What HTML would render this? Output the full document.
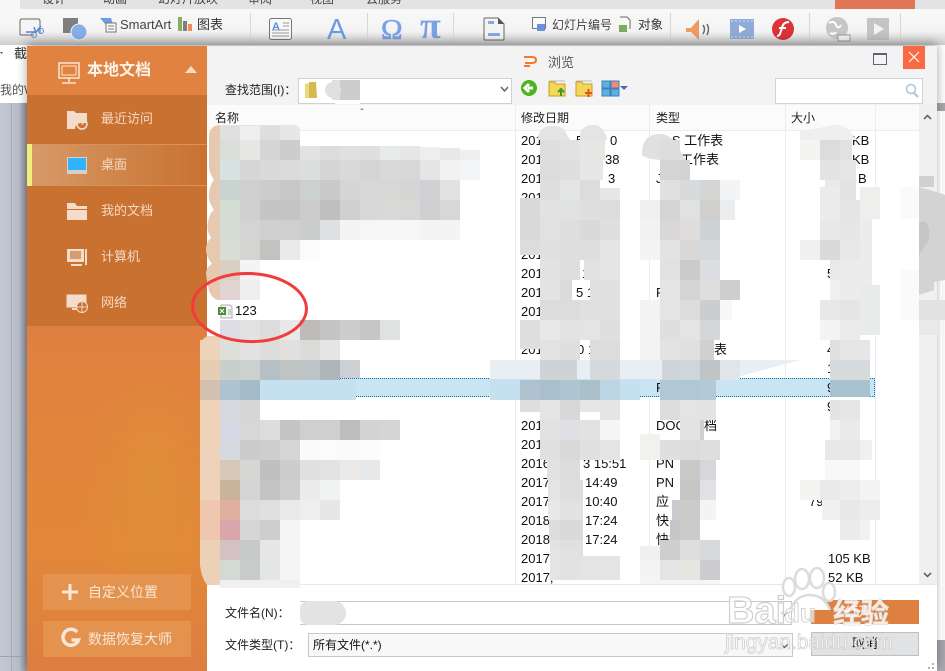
<!DOCTYPE html>
<html><head><meta charset="utf-8"><style>
*{box-sizing:border-box}
html,body{margin:0;padding:0}
body{width:945px;height:671px;position:relative;overflow:hidden;background:#fff;font-family:"Liberation Sans","Noto Sans CJK SC",sans-serif;font-size:13px;color:#111}
.a{position:absolute;white-space:nowrap}
.t{position:absolute;white-space:nowrap;line-height:16px;font-size:13px}
svg{position:absolute;left:0;top:0}
.m rect{width:20px;height:20px;shape-rendering:crispEdges}
.nav{position:absolute;left:101px;color:#f5d8c2;font-size:13px;line-height:16px;white-space:nowrap}
.btn{position:absolute;left:43px;width:148px;height:36px;background:#e4934f;color:#f8e6d6;font-size:14px;line-height:36px;padding-left:45px}
.ln{position:absolute;top:105px;width:1px;height:479px;background:#e5edf8}
.h{position:absolute;top:110px;font-size:12px;line-height:16px;color:#222}
</style></head><body>

<!-- ribbon -->
<div class="a" style="left:0;top:0;width:945px;height:9px;background:#e3e3e5"></div>
<div class="a" style="left:0;top:0;width:20px;height:9px;background:#f6f6f6"></div>
<div class="a" style="left:835px;top:0;width:80px;height:9px;background:#e07656"></div>
<div class="a" style="left:0;top:9px;width:945px;height:36px;background:linear-gradient(#f8f8f8,#f4f4f4 60%,#cfcfcf)"></div>
<div class="a" style="left:0;top:-9px;height:16px;width:945px;font-size:12px;line-height:16px;color:#444">
<span class="a" style="left:42px">设计</span><span class="a" style="left:103px">动画</span><span class="a" style="left:158px">幻灯片放映</span><span class="a" style="left:248px">审阅</span><span class="a" style="left:310px">视图</span><span class="a" style="left:366px">云服务</span></div>
<div class="a" style="left:250px;top:13px;width:1px;height:32px;background:#d8d8d8"></div>
<div class="a" style="left:367px;top:13px;width:1px;height:32px;background:#d8d8d8"></div>
<div class="a" style="left:453px;top:13px;width:1px;height:32px;background:#d8d8d8"></div>
<div class="a" style="left:670px;top:13px;width:1px;height:32px;background:#d8d8d8"></div>
<div class="a" style="left:809px;top:13px;width:1px;height:32px;background:#d8d8d8"></div>
<div class="a" style="left:900px;top:13px;width:1px;height:32px;background:#d8d8d8"></div>
<span class="t" style="left:120px;top:17px;font-size:13px;color:#444">SmartArt</span>
<span class="t" style="left:197px;top:17px;color:#333">图表</span>
<span class="t" style="left:552px;top:17px;font-size:12px;color:#444">幻灯片编号</span>
<span class="t" style="left:638px;top:17px;font-size:12.5px;color:#333">对象</span>
<span class="t" style="left:14px;top:46px;color:#333">截</span>
<span class="t" style="left:0;top:82px;font-size:12px;color:#555">我的W</span>

<svg width="945" height="60" viewBox="0 0 945 60" fill="none">
 <path d="M0 52h3l-1.500 2z" fill="#555"/>
 <path d="M20 35V21q0-2 2-2h16q2 0 2 2v12M20 35h14" stroke="#666" stroke-width="1"/>
 <circle cx="34" cy="35" r="2.500" stroke="#5a87d8"/><circle cx="41" cy="31" r="2.500" stroke="#5a87d8"/><path d="M26 32h10l5-6M34 27l2 6" stroke="#5a87d8" stroke-width="1.500"/>
 <rect x="63" y="18" width="15" height="15" fill="#7f7f7f"/><circle cx="79" cy="32" r="8" fill="#86aee8" stroke="#f4f4f4"/>
 <path d="M100 18h11l2 6h-8z" fill="#6e9ce0"/><rect x="106" y="23" width="10" height="9" fill="#fafafa" stroke="#777"/><path d="M108 26h6M108 29h6" stroke="#777"/>
 <rect x="178" y="17" width="4" height="14" fill="#86ad62"/><rect x="183" y="21" width="4" height="10" fill="#7f7f7f"/><rect x="188" y="24" width="4" height="7" fill="#ee8e58"/>
 <rect x="269.500" y="18.500" width="22" height="21" rx="2" fill="#f8f8f8" stroke="#777"/><path d="M283 23h6M283 26h6M272 30h17M272 33h17M272 36h17" stroke="#999"/><text x="272" y="30" font-family="Liberation Sans" font-size="11" font-weight="bold" fill="#5a8ee0">A</text>
 <text x="327" y="39" font-family="Liberation Sans" font-size="29" fill="#6f9be6">A</text>
 <text x="381" y="39" font-family="Liberation Serif" font-size="29" fill="#7aa2e6" stroke="#7aa2e6" stroke-width=".6">Ω</text>
 <text x="420" y="38" font-family="Liberation Serif" font-size="38" font-weight="bold" fill="#7aa2e6">π</text>
 <path d="M485 18h13l6 6v15q0 1-1 1h-18q-1 0-1-1V19q0-1 1-1z" fill="#f4f4f4" stroke="#666"/><path d="M498 18l6 6h-6z" fill="#555"/><rect x="488" y="21" width="6" height="3" fill="#86a8e4"/><rect x="488" y="33" width="12" height="3" fill="#86a8e4"/>
 <rect x="532.500" y="17.500" width="13" height="11" fill="#fafafa" stroke="#777"/><rect x="537" y="24" width="8" height="7" fill="#6a92d8"/>
 <path d="M620 17h7l3 3v9" stroke="#666" fill="#fafafa"/><rect x="619" y="25" width="8" height="7" fill="#7cab5c"/>
 <path d="M686 28h5l8-9v21l-8-8h-5z" fill="#ef9a60"/><path d="M703 25q3 4 0 9M707 24q3 5 0 11" stroke="#666" stroke-width="1.500"/>
 <rect x="730" y="19" width="24" height="20" fill="#90abd8"/><path d="M739 25v8l7-4z" fill="#fff"/><path d="M731 21h22M731 37h22" stroke="#d4e0f2" stroke-dasharray="2 2"/>
 <circle cx="783" cy="29" r="11" fill="#dc3238"/><path d="M789 22q-6 0-7 6l-2 6q-1 2-3 2M779 28h7" stroke="#fff" stroke-width="2"/>
 <circle cx="837" cy="28" r="11" fill="#c6c6c6"/><path d="M829 23q5-3 7 2t5 0M830 33q4 2 6-1" stroke="#fff" stroke-width="2"/><rect x="838" y="35" width="12" height="6" fill="#f4f4f4" stroke="#999"/>
 <rect x="867" y="18" width="22" height="22" rx="1" fill="#c4c4c4"/><path d="M874 23v12l10-6z" fill="#f4f4f4"/>
</svg>

<!-- backgrounds outside dialog -->
<div class="a" style="left:0;top:103px;width:27px;height:568px;background:linear-gradient(90deg,#c4c8d4,#b8bcc8 70%,#8f929c)"></div>
<div class="a" style="left:11px;top:103px;width:1px;height:568px;background:#a6aab6"></div>
<div class="a" style="left:0;top:656px;width:27px;height:1px;background:#9ea1ac"></div>
<div class="a" style="left:937px;top:103px;width:8px;height:8px;background:#a8a8ae"></div>
<div class="a" style="left:937px;top:640px;width:8px;height:31px;background:#a9a9ae"></div>

<!-- dialog -->
<div class="a" style="left:27px;top:46px;width:910px;height:625px;background:#fff;box-shadow:0 -3px 10px rgba(0,0,0,.35)"></div>
<div class="a" style="left:937px;top:111px;width:5px;height:529px;background:linear-gradient(90deg,#d8d8d8,#fff)"></div>
<div class="a" style="left:207px;top:46px;width:730px;height:59px;background:#f3f3f3"></div>

<!-- sidebar -->
<div class="a" style="left:27px;top:46px;width:180px;height:625px;background:radial-gradient(ellipse 70px 130px at 125px 440px,#df8e38,rgba(223,142,56,0)),linear-gradient(#e08240,#e08040 45%,#e28838 80%,#dc7e40)"></div>
<div class="a" style="left:27px;top:95px;width:180px;height:231px;background:#c97130"></div>
<div class="a" style="left:27px;top:144px;width:180px;height:42px;background:linear-gradient(90deg,#d89a6c,#d08a50 40%,#c97130);border-top:1px solid #d8925a;border-bottom:1px solid #d8925a"></div>
<div class="a" style="left:27px;top:144px;width:5px;height:42px;background:#f4ee7e"></div>
<span class="a" style="left:87px;top:60px;font-size:16px;line-height:22px;font-weight:bold;color:#fdf3e9">本地文档</span>
<span class="nav" style="top:111px">最近访问</span>
<span class="nav" style="top:157px">桌面</span>
<span class="nav" style="top:203px">我的文档</span>
<span class="nav" style="top:249px">计算机</span>
<span class="nav" style="top:295px">网络</span>
<div class="btn" style="top:574px">自定义位置</div>
<div class="btn" style="top:621px">数据恢复大师</div>

<svg width="945" height="671" viewBox="0 0 945 671" fill="none">
 <rect x="59" y="63" width="20" height="15" stroke="#fbe6d4" stroke-width="1.500"/><rect x="62" y="66" width="14" height="9" stroke="#fbe6d4"/><path d="M69 78v4M62 83h14" stroke="#fbe6d4" stroke-width="1.500"/>
 <path d="M185 73l6-7 6 7z" fill="#f8dcc8"/>
 <path d="M67 111h7l2 2h11v10h-6a6 6 0 0 0-6 6h-8z" fill="#f3dcc9"/><circle cx="82" cy="124" r="5" stroke="#f3dcc9" stroke-width="1.500"/><path d="M82 121v3h2" stroke="#f3dcc9"/>
 <rect x="67" y="157" width="20" height="17" fill="#d8d0c8"/><rect x="68" y="158" width="18" height="12" fill="#2fb4fb"/>
 <path d="M67 203h8l2 3h10v3H67z" fill="#f3dcc9"/><rect x="67" y="210" width="20" height="10" fill="#f3dcc9"/>
 <rect x="67" y="249" width="17" height="13" fill="#f3dcc9"/><rect x="70" y="251" width="11" height="8" fill="#d89b70"/><rect x="85" y="249" width="2" height="16" fill="#f3dcc9"/><rect x="71" y="264" width="11" height="2" fill="#f3dcc9"/>
 <rect x="67" y="295" width="19" height="12" fill="#f3dcc9" stroke="#f3dcc9"/><path d="M72 309h9" stroke="#f3dcc9" stroke-width="2"/><circle cx="82" cy="307" r="5.500" fill="#c97130" stroke="#f3dcc9"/><path d="M77 307h10M82 302v10" stroke="#f3dcc9"/>
 <path d="M62 592h16M70 584v16" stroke="#f8e6d6" stroke-width="3"/>
 <path d="M77 632a8 8 0 1 0 1.500 8h-7" stroke="#f8e6d6" stroke-width="3.500"/>
</svg>

<!-- title / toolbar -->
<svg width="945" height="110" viewBox="0 0 945 110" fill="none" style="z-index:2">
 <path d="M524 57h8q4 0 4 3t-4 3h-7M524 66h6" stroke="#f07a2a" stroke-width="2"/>
 <rect x="873.500" y="53.500" width="13" height="11" stroke="#5a6478" stroke-width="1"/><path d="M873 54h14" stroke="#5a6478" stroke-width="2"/>
 <rect x="903" y="46" width="22" height="23" fill="#f96a43"/><path d="M909 52l10 10M919 52l-10 10" stroke="#fff" stroke-width="1.200"/>
 <circle cx="529" cy="88" r="8" fill="#4cb421"/><path d="M533 88h-5M529 84l-4 4 4 4" stroke="#fff" stroke-width="3"/>
 <path d="M549 82h6l1 2h9v12h-16z" fill="#f4d65c" stroke="#c8a018"/><path d="M561 91v5M558 92l3-3 3 3" stroke="#3a9a2a" stroke-width="2"/><path d="M549 81h16" stroke="#bbb"/>
 <path d="M576 82h6l1 2h9v12h-16z" fill="#f4d65c" stroke="#c8a018"/><path d="M585 93h7M588.500 89v8" stroke="#e84e20" stroke-width="2"/><path d="M576 81h16" stroke="#bbb"/>
 <rect x="602" y="81" width="8" height="7" fill="#5fb0d8" stroke="#3a80c8"/><rect x="611" y="81" width="8" height="7" fill="#f08a70" stroke="#3a80c8"/><rect x="602" y="89" width="8" height="7" fill="#5fb0d8" stroke="#3a80c8"/><rect x="611" y="89" width="8" height="7" fill="#5fb0d8" stroke="#3a80c8"/><path d="M620 86h8l-4 4z" fill="#4a6aa0"/>
 <path d="M501 87l3.500 4 3.500-4" stroke="#666" stroke-width="1.500"/>
 <circle cx="911" cy="89" r="4.500" stroke="#b0c4d4" stroke-width="1.500"/><path d="M914 93l4 4" stroke="#b0c4d4" stroke-width="2"/>
 <path d="M359 111l3-3 3 3z" fill="#6a9ac8"/>
</svg>
<span class="a" style="left:548px;top:55px;font-size:13px;line-height:16px;color:#555;z-index:2">浏览</span>
<span class="a" style="left:225px;top:82px;font-size:12px;line-height:16px;color:#222">查找范围(I)：</span>
<div class="a" style="left:298px;top:78px;width:214px;height:26px;background:#fff;border:1px solid #d0d0d0"></div>
<div class="a" style="left:775px;top:78px;width:148px;height:26px;background:#fff;border:1px solid #cdd3d6"></div>
<svg width="360" height="110" viewBox="0 0 360 110" style="z-index:2" fill="none">
 <path d="M305 84l9-2v16h-9z" fill="#ecd97a"/><path d="M309 82h7l1 16h-8z" fill="#d8b850"/>
 <path d="M335 80h26v24h-26z" fill="#fff"/><rect x="340" y="80" width="20" height="20" fill="#cdcdcd"/><circle cx="333" cy="90" r="8" fill="#e0e0e0"/><rect x="332" y="80" width="8" height="20" fill="#e0e0e0"/>
</svg>

<!-- list header -->
<div class="a" style="left:207px;top:105px;width:712px;height:26px;background:#fbfbfb;border-bottom:1px solid #e5edf5"></div>
<div class="a" style="left:919px;top:105px;width:18px;height:479px;background:#f0f0f0"></div>
<div class="ln" style="left:515px"></div><div class="ln" style="left:649px"></div><div class="ln" style="left:785px"></div><div class="ln" style="left:875px"></div>
<div class="a" style="left:872px;top:218px;width:47px;height:117px;background:#fff"></div>
<span class="h" style="left:215px">名称</span><span class="h" style="left:521px">修改日期</span><span class="h" style="left:656px">类型</span><span class="h" style="left:791px">大小</span>

<!-- selected row -->
<div class="a" style="left:207px;top:378px;width:668px;height:19px;background:#c9e5f4;border:1px dotted #0a6fb0;border-left:0"></div>

<!-- rows text -->
<div class="a" style="left:0;top:0;width:945px;height:600px;font-size:12.500px;color:#111">
<span class="t" style="left:521px;top:133px">201</span><span class="t" style="left:576px;top:133px">5</span><span class="t" style="left:610px;top:133px">0</span>
<span class="t" style="left:521px;top:152px">201</span><span class="t" style="left:570px;top:152px">7</span><span class="t" style="left:605px;top:152px">38</span>
<span class="t" style="left:521px;top:171px">201</span><span class="t" style="left:608px;top:171px">3</span>
<span class="t" style="left:521px;top:190px">201</span>
<span class="t" style="left:521px;top:247px">201</span>
<span class="t" style="left:521px;top:266px">201</span><span class="t" style="left:582px;top:266px">1</span>
<span class="t" style="left:521px;top:285px">201</span><span class="t" style="left:576px;top:285px">5 1</span>
<span class="t" style="left:521px;top:304px">201</span>
<span class="t" style="left:521px;top:361px">201</span><span class="t" style="left:577px;top:361px">7 1</span>
<span class="t" style="left:577px;top:342px">0 1</span><span class="t" style="left:521px;top:342px">201</span>
<span class="t" style="left:521px;top:418px">201</span>
<span class="t" style="left:521px;top:437px">201</span>
<span class="t" style="left:521px;top:456px">2016</span><span class="t" style="left:583px;top:456px">3 15:51</span>
<span class="t" style="left:521px;top:475px">2017</span><span class="t" style="left:585px;top:475px">14:49</span>
<span class="t" style="left:521px;top:494px">2017</span><span class="t" style="left:585px;top:494px">10:40</span>
<span class="t" style="left:521px;top:513px">2018</span><span class="t" style="left:585px;top:513px">17:24</span>
<span class="t" style="left:521px;top:532px">2018</span><span class="t" style="left:585px;top:532px">17:24</span>
<span class="t" style="left:521px;top:551px">2017</span>
<span class="t" style="left:521px;top:570px">2017,</span>
<span class="t" style="left:656px;top:133px">XLS 工作表</span><span class="t" style="left:680px;top:152px">工作表</span><span class="t" style="left:656px;top:171px">J</span><span class="t" style="left:656px;top:285px">P</span><span class="t" style="left:656px;top:209px">XLS</span>
<span class="t" style="left:714px;top:342px">表</span><span class="t" style="left:656px;top:361px">XLS</span><span class="t" style="left:656px;top:380px">P</span>
<span class="t" style="left:656px;top:418px">DOC</span><span class="t" style="left:704px;top:418px">档</span><span class="t" style="left:656px;top:456px">PN</span><span class="t" style="left:656px;top:475px">PN</span><span class="t" style="left:656px;top:494px">应</span><span class="t" style="left:656px;top:513px">快</span><span class="t" style="left:656px;top:532px">快捷</span>
<span class="t" style="left:852px;top:133px">KB</span><span class="t" style="left:852px;top:152px">KB</span><span class="t" style="left:858px;top:171px">B</span><span class="t" style="left:827px;top:266px">55</span><span class="t" style="left:827px;top:342px">4</span><span class="t" style="left:827px;top:361px">1</span><span class="t" style="left:827px;top:380px">9</span><span class="t" style="left:827px;top:399px">9</span><span class="t" style="left:809px;top:494px">79,</span><span class="t" style="left:828px;top:551px">105 KB</span><span class="t" style="left:828px;top:570px">52 KB</span>
<span class="t" style="left:235px;top:303px;color:#111">123</span>
</div>

<!-- mosaic -->
<svg class="m" width="945" height="671" viewBox="0 0 945 671" style="z-index:1">
<path d="M209 133q3-8 11-8v175h-2q-8-2-10-14-2-9-2-14 2-6 6-8-6-8-6-14 0-8 5-12-5-8-3-16 2-10 6-12-6-8-5-16 1-10 5-14-4-6-5-12 0-8 0-14z" fill="#e6c9b0"/>
<path d="M200 345q2-7 8-9h12v4h-20zM200 565h20v20h-13q-6-8-7-20z" fill="#edd0b8"/>
<rect x="200" y="340" fill="#edd3ba"/><rect x="200" y="360" fill="#e6ceb5"/><rect x="200" y="380" fill="#d3c1b1"/>
<rect x="200" y="400" fill="#efd2ba" style="height:100px"/><rect x="200" y="500" fill="#eec7ae" style="height:40px"/><rect x="200" y="540" fill="#edd0b8" style="height:25px"/>
<path d="M225 125h-5v15h80v-8q0-7-7-7z" fill="#e4e4e4"/>
<path d="M220 126h20v14h-20z" fill="#dfe0df"/>
<path d="M240 126h20v14h-20z" fill="#eeeeee"/><path d="M260 126h20v14h-20z" fill="#dedede"/><path d="M280 125h13q7 0 7 7v8h-20z" fill="#e6e7e6"/>
<g>
<rect x="220" y="140" fill="#d9dfd8"/><rect x="240" y="140" fill="#e7e7e6"/><rect x="260" y="140" fill="#d5d5d5"/><rect x="280" y="140" fill="#cdcdcb"/><rect x="300" y="146" fill="#e2e2e2" style="height:14px"/><rect x="320" y="146" fill="#dcdcdc" style="height:14px"/><rect x="340" y="146" fill="#e0e0e0" style="height:14px"/><rect x="360" y="146" fill="#dfdfdf" style="height:14px"/><rect x="380" y="146" fill="#e9eaea" style="height:14px"/><rect x="400" y="146" fill="#e6e6e6" style="height:14px"/><rect x="420" y="147" fill="#eeeeee" style="height:13px"/><rect x="440" y="148" fill="#e8e8e8" style="height:12px"/><rect x="460" y="150" fill="#eeeeee" style="height:10px"/>
<rect x="220" y="160" fill="#d7e2e3"/><rect x="240" y="160" fill="#d6d6d6"/><rect x="260" y="160" fill="#dadada"/><rect x="280" y="160" fill="#dbdbdb"/><rect x="300" y="160" fill="#dcdddd"/><rect x="320" y="160" fill="#d5d5d5"/><rect x="340" y="160" fill="#d9d9d7"/><rect x="360" y="160" fill="#d5d3d4"/><rect x="380" y="160" fill="#d9d9d9"/><rect x="400" y="160" fill="#d7d7d7"/><rect x="420" y="160" fill="#e5e5e6"/><rect x="440" y="160" fill="#f2f2f2"/><rect x="460" y="160" fill="#f4f5f6"/>
<rect x="220" y="180" fill="#c9d3d0"/><rect x="240" y="180" fill="#cfcfcf"/><rect x="260" y="180" fill="#cdcdcd"/><rect x="280" y="180" fill="#c8c7c5"/><rect x="300" y="180" fill="#cdd0d0"/><rect x="320" y="180" fill="#c9c9c9"/><rect x="340" y="180" fill="#d5d5d5"/><rect x="360" y="180" fill="#d7d7d7"/><rect x="380" y="180" fill="#d7d7d6"/><rect x="400" y="180" fill="#d7d5d3"/><rect x="420" y="180" fill="#d0d1d4"/><rect x="440" y="180" fill="#e2e2e2"/>
<rect x="220" y="200" fill="#d5ded5"/><rect x="240" y="200" fill="#d0d0d0"/><rect x="260" y="200" fill="#c6c4c5"/><rect x="280" y="200" fill="#c3c5c5"/><rect x="300" y="200" fill="#cccccc"/><rect x="320" y="200" fill="#bebfbe"/><rect x="340" y="200" fill="#d0d0d0"/><rect x="360" y="200" fill="#d8d8d8"/><rect x="380" y="200" fill="#d9d9d8"/><rect x="400" y="200" fill="#d7d7d6"/><rect x="420" y="200" fill="#ced0d2"/><rect x="440" y="200" fill="#d6d7d7"/>
<rect x="220" y="220" fill="#d5ddd5"/><rect x="240" y="220" fill="#d4d4d4"/><rect x="260" y="220" fill="#d0d0d0"/><rect x="280" y="220" fill="#d1cfce"/><rect x="300" y="220" fill="#cbcccc"/><rect x="320" y="220" fill="#dfe0e2"/><rect x="340" y="220" fill="#f4f4f3"/><rect x="360" y="220" fill="#f6f6f6"/><rect x="380" y="220" fill="#f7f7f7"/><rect x="400" y="220" fill="#f7f7f7"/><rect x="420" y="220" fill="#f4f4f4"/><rect x="440" y="220" fill="#f4f4f5"/>
<rect x="220" y="240" fill="#d8ddd5"/><rect x="240" y="240" fill="#d4d4d3"/><rect x="260" y="240" fill="#c2c2c1"/><rect x="280" y="240" fill="#e9eaea"/><rect x="300" y="240" fill="#fbfbfb"/>
<rect x="220" y="260" fill="#d9cfc2"/><rect x="240" y="260" fill="#f3f5f5"/>
<rect x="220" y="280" fill="#e0d5d3"/><rect x="240" y="280" fill="#eeeeee"/>

<rect x="220" y="320" fill="#dddde3"/><rect x="240" y="320" fill="#e2e2e2"/><rect x="260" y="320" fill="#dcdcdc"/><rect x="280" y="320" fill="#e8e8e8"/><rect x="300" y="320" fill="#bdbcba"/><rect x="320" y="320" fill="#c5c5c5"/><rect x="340" y="320" fill="#cdcdcd"/><rect x="360" y="320" fill="#c7c5c7"/><rect x="380" y="320" fill="#e0e1e1"/>
<rect x="220" y="340" fill="#dde0d9"/><rect x="240" y="340" fill="#e2e2e2"/><rect x="260" y="340" fill="#dcdedc"/><rect x="280" y="340" fill="#e1e0de"/><rect x="300" y="340" fill="#dadcda"/><rect x="320" y="340" fill="#e5e5e3"/>
<rect x="220" y="360" fill="#c8d0cc"/><rect x="240" y="360" fill="#ccd0cf"/><rect x="260" y="360" fill="#b7bfc6"/><rect x="280" y="360" fill="#bfc4c3"/><rect x="300" y="360" fill="#bcc4c7"/><rect x="320" y="360" fill="#aeb6b9"/><rect x="340" y="360" fill="#ccd0d4" style="height:18px"/>
<rect x="220" y="380" fill="#aec3d0"/><rect x="240" y="380" fill="#a3bcc8"/><rect x="260" y="380" fill="#c5e0ee" style="width:96px"/>
<rect x="220" y="400" fill="#d7d9df"/><rect x="240" y="400" fill="#d6d6d6"/>
<rect x="220" y="420" fill="#d5d9e3"/><rect x="240" y="420" fill="#d8d7d5"/><rect x="260" y="420" fill="#dcdede"/><rect x="280" y="420" fill="#c4c4c4"/><rect x="300" y="420" fill="#cfcfcd"/><rect x="320" y="420" fill="#cfcfcd"/><rect x="340" y="420" fill="#bebdbe"/><rect x="360" y="420" fill="#d2d3d2"/><rect x="380" y="420" fill="#d5d5d3"/>
<rect x="220" y="440" fill="#d7d9e0"/><rect x="240" y="440" fill="#cbcbcb"/><rect x="260" y="440" fill="#cdcecd"/><rect x="280" y="440" fill="#d6d6d8"/><rect x="300" y="440" fill="#fafafa"/><rect x="320" y="440" fill="#fbfbfb"/><rect x="340" y="440" fill="#fafafa"/><rect x="360" y="440" fill="#fcfcfc"/>
<rect x="220" y="460" fill="#d8c8b9"/><rect x="240" y="460" fill="#d6d6d4"/><rect x="260" y="460" fill="#bfc1c0"/><rect x="280" y="460" fill="#cdcdcd"/><rect x="300" y="460" fill="#e0e0e0"/><rect x="320" y="460" fill="#e3e3e3"/><rect x="340" y="460" fill="#ebeae8"/><rect x="360" y="460" fill="#e7e8ea"/>
<rect x="220" y="480" fill="#c9b39a"/><rect x="240" y="480" fill="#d5d5d5"/><rect x="260" y="480" fill="#c5c4c2"/><rect x="280" y="480" fill="#cececf"/><rect x="300" y="480" fill="#ebebeb"/><rect x="320" y="480" fill="#f1f3f3"/>
<rect x="220" y="500" fill="#dfb0a0"/><rect x="240" y="500" fill="#dcdcdc"/><rect x="260" y="500" fill="#e0e0e0"/><rect x="280" y="500" fill="#e9e9e9"/><rect x="300" y="500" fill="#eeeeee"/><rect x="320" y="500" fill="#e7e7e7"/>
<rect x="220" y="520" fill="#d9a6ac"/><rect x="240" y="520" fill="#d6d6d6"/><rect x="260" y="520" fill="#cecece"/><rect x="280" y="520" fill="#f4f5f7"/>
<rect x="220" y="540" fill="#d2c2c4"/><rect x="240" y="540" fill="#c8cac9"/><rect x="260" y="540" fill="#e7e7e7"/><rect x="280" y="540" fill="#f5f5f5"/>
<rect x="220" y="560" fill="#d3d9d3"/><rect x="240" y="560" fill="#c9cbca"/><rect x="260" y="560" fill="#e4e5e5"/><rect x="280" y="560" fill="#f5f5f5"/>
<rect x="220" y="580" fill="#f0f0f0" style="width:80px;height:8px"/>
</g>
<!-- light band overlays -->
<path d="M490 360h310l-70 19H490z" fill="#e8eff4"/>
<rect x="490" y="380" fill="#c5e0ee" style="width:130px"/><rect x="620" y="380" fill="#c5e0ee" style="width:20px"/>
<!-- date -->
<path d="M538 140v-3q2-11 14-11t14 7l4 7zM580 140v-6q2-9 13-9t14 14v1z" fill="#e4e4e4"/>
<rect x="540" y="140" fill="#dedede"/><rect x="560" y="140" fill="#e2e2e2"/><rect x="580" y="140" fill="#e6e6e4" style="width:25px"/>
<rect x="540" y="160" fill="#dcdcdc"/><rect x="560" y="160" fill="#dfdfdf"/><rect x="580" y="160" fill="#e7e7e5" style="width:23px"/>
<rect x="540" y="180" fill="#dedede"/><rect x="560" y="180" fill="#e4e6e6"/><rect x="580" y="180" fill="#dbdcdb"/><rect x="600" y="188" fill="#e6e7e6" style="height:12px"/>
<rect x="520" y="198" fill="#d9d9d9" style="height:22px"/><rect x="540" y="200" fill="#e3e2e0"/><rect x="560" y="200" fill="#e1e3e3"/><rect x="580" y="200" fill="#e0dfdd"/><rect x="600" y="200" fill="#dcdcdc"/>
<rect x="520" y="220" fill="#d9d9da"/><rect x="540" y="220" fill="#e1e1e1"/><rect x="560" y="220" fill="#dedede"/><rect x="580" y="220" fill="#dadada"/><rect x="600" y="220" fill="#dedfe1"/>
<rect x="520" y="240" fill="#dcdcdc" style="height:15px"/><rect x="540" y="240" fill="#e0e0e0"/><rect x="560" y="240" fill="#dfdfdf"/><rect x="580" y="240" fill="#dedede"/><rect x="600" y="240" fill="#e5e5e5"/>
<rect x="540" y="260" fill="#e2e2e2"/><rect x="560" y="260" fill="#dedede"/><rect x="584" y="260" fill="#e2e2df"/><rect x="600" y="260" fill="#e5e5e5"/>
<rect x="540" y="280" fill="#e3e3e3" style="width:30px"/><rect x="560" y="280" fill="#dbdbdb" style="width:12px"/><rect x="590" y="280" fill="#e0e0e0" style="width:30px"/>
<rect x="540" y="300" fill="#dcdcdc"/><rect x="560" y="300" fill="#dcdcdc"/><rect x="580" y="300" fill="#e0e0e0"/><rect x="600" y="300" fill="#e0e0e0"/>
<rect x="520" y="320" fill="#dfdfdf"/><rect x="540" y="320" fill="#e8e8e8"/><rect x="560" y="320" fill="#e3e3e3"/><rect x="580" y="320" fill="#e4e4e4"/><rect x="600" y="320" fill="#dfdfdf"/>
<rect x="520" y="340" fill="#dedede" style="height:9px"/><rect x="540" y="340" fill="#e3e3e3"/><rect x="560" y="340" fill="#dfdfdf"/><rect x="590" y="340" fill="#dcdcdc" style="width:30px"/>
<rect x="540" y="360" fill="#cfd3d5"/><rect x="560" y="360" fill="#cfd3d5" style="width:17px"/><rect x="590" y="360" fill="#d5d9dc" style="width:30px"/>
<rect x="520" y="380" fill="#aec3cf"/><rect x="540" y="380" fill="#a9bfcc"/><rect x="560" y="380" fill="#afc6d2"/><rect x="580" y="380" fill="#a9bfca"/><rect x="600" y="380" fill="#bcd5e3"/>
<rect x="520" y="400" fill="#dedede" style="height:12px"/><rect x="540" y="400" fill="#e5e5e5"/><rect x="560" y="400" fill="#d8d8d8"/><rect x="580" y="400" fill="#e6e6e4" style="height:12px"/><rect x="600" y="400" fill="#e5e5e5"/>
<rect x="540" y="420" fill="#e3e2e0"/><rect x="560" y="420" fill="#dfe0e3"/><rect x="580" y="420" fill="#e2e2e2"/><rect x="600" y="420" fill="#f5f5f5"/>
<rect x="540" y="440" fill="#e0e0e0"/><rect x="560" y="440" fill="#d9d9d9"/><rect x="580" y="440" fill="#e0e0e0"/><rect x="600" y="440" fill="#e4e4e4"/>
<rect x="547" y="460" fill="#e2e2e2" style="width:13px"/><rect x="560" y="460" fill="#dcdcdc" style="width:20px"/>
<rect x="548" y="480" fill="#e4e4e4" style="width:12px"/><rect x="560" y="480" fill="#dedede" style="width:23px"/>
<rect x="548" y="500" fill="#e8e8e8" style="width:12px"/><rect x="560" y="500" fill="#e2e2e2" style="width:23px"/>
<rect x="549" y="520" fill="#dddddd" style="width:11px"/><rect x="560" y="520" fill="#dadada" style="width:23px"/>
<rect x="550" y="540" fill="#e2e2e2" style="width:10px"/><rect x="560" y="540" fill="#e0e0e0" style="width:23px"/>
<rect x="550" y="550" fill="#e4e4e4" style="width:10px;height:30px"/><rect x="560" y="550" fill="#e2e2e2" style="height:30px"/><rect x="580" y="556" fill="#e4e4e4" style="width:40px;height:24px"/>
<!-- type -->
<path d="M642 154q0-20 18-20 10 0 16 10l10 16h-26q-18-2-18-6z" fill="#e0e0e0"/>
<rect x="660" y="140" fill="#dddddd" style="height:20px"/><rect x="660" y="160" fill="#d5d4d2"/><rect x="680" y="160" fill="#d2d3d2" style="width:10px"/>
<rect x="660" y="180" fill="#e0e0e0"/><rect x="680" y="180" fill="#d8dbdd"/><rect x="700" y="180" fill="#d5d5d3"/><rect x="720" y="180" fill="#f3f4f5"/>
<rect x="640" y="200" fill="#f0f0f0"/><rect x="660" y="200" fill="#d4d4d4"/><rect x="680" y="200" fill="#e0e2e2"/><rect x="700" y="200" fill="#cfcfcd"/><rect x="720" y="200" fill="#ecedee" style="width:15px"/>
<rect x="640" y="220" fill="#f2f2f2"/><rect x="660" y="220" fill="#d9d7d7"/><rect x="680" y="220" fill="#dfdcdc"/><rect x="700" y="220" fill="#cdd2d4"/>
<rect x="640" y="240" fill="#f4f4f4"/><rect x="660" y="240" fill="#e3e3e3"/><rect x="680" y="240" fill="#d9d8d6"/><rect x="700" y="240" fill="#d6d9db"/>
<rect x="660" y="260" fill="#e1e1e1"/><rect x="680" y="260" fill="#cbcbcb"/><rect x="700" y="260" fill="#dcdde0"/>
<rect x="660" y="280" fill="#e5e5e5"/><rect x="680" y="280" fill="#d2d4d5"/><rect x="700" y="280" fill="#dedede"/><rect x="720" y="280" fill="#cdced0"/>
<rect x="640" y="300" fill="#f3f3f3"/><rect x="660" y="300" fill="#e4e4e4"/><rect x="680" y="300" fill="#dedddc"/><rect x="700" y="300" fill="#cccdcf"/><rect x="720" y="300" fill="#f7f7f7" style="width:12px"/>
<rect x="640" y="320" fill="#f3f3f3"/><rect x="660" y="320" fill="#dfdfdf"/><rect x="680" y="320" fill="#e4e4e4"/><rect x="700" y="320" fill="#d5d6d8"/>
<rect x="640" y="340" fill="#f3f3f3"/><rect x="660" y="340" fill="#e3e3e3"/><rect x="680" y="340" fill="#e0e0e0"/><rect x="700" y="340" fill="#d0d0d0" style="width:14px"/>
<rect x="662" y="360" fill="#ced4d8" style="width:18px"/><rect x="680" y="360" fill="#cdd6dc"/><rect x="700" y="360" fill="#bfc4c7"/><rect x="720" y="360" fill="#dfe5e9"/>
<rect x="660" y="380" fill="#b0c7d5"/><rect x="680" y="380" fill="#b0c7d5"/><rect x="700" y="380" fill="#b3c9d6" style="width:16px"/>
<rect x="660" y="400" fill="#dddddd"/><rect x="680" y="400" fill="#e4e4e4"/><rect x="700" y="400" fill="#e3e3e3" style="width:16px"/>
<rect x="680" y="420" fill="#e3e3e3"/><rect x="700" y="420" fill="#cfcfd1" style="width:4px"/>
<rect x="640" y="434" fill="#f1f1ee" style="height:26px"/><rect x="660" y="440" fill="#dfdfdf"/><rect x="680" y="440" fill="#dcdcdc"/><rect x="700" y="440" fill="#dedede"/>
<rect x="680" y="460" fill="#cbc9c7"/><rect x="700" y="460" fill="#d5d7da" style="width:16px"/>
<rect x="680" y="480" fill="#c8c6c4"/><rect x="700" y="480" fill="#dfe1e4" style="width:16px"/>
<rect x="672" y="500" fill="#c9cbce" style="width:8px"/><rect x="680" y="500" fill="#cccbc9"/><rect x="700" y="500" fill="#f4f4f4" style="width:16px"/>
<rect x="680" y="520" fill="#cbcbc9"/><rect x="670" y="520" fill="#c6c6c6" style="width:10px"/>
<rect x="640" y="546" fill="#f0f0f0" style="height:14px"/><rect x="660" y="540" fill="#cecece"/><rect x="680" y="540" fill="#dedede"/><rect x="700" y="540" fill="#d8d9da"/>
<rect x="640" y="560" fill="#f4f4f4"/><rect x="660" y="560" fill="#e4e4e4"/><rect x="680" y="560" fill="#e5e5e2"/><rect x="700" y="560" fill="#cdcdd0"/>
<rect x="640" y="580" fill="#f5f5f5" style="width:80px;height:4px"/>
<!-- size -->
<path d="M800 140v-9l20-3q12-4 20-3 8 2 14 12l4 3z" fill="#efefed"/>
<rect x="800" y="140" fill="#f4f4f2"/><rect x="820" y="140" fill="#dcdcdc"/><rect x="840" y="140" fill="#e2e2e2" style="width:12px"/>
<rect x="820" y="160" fill="#e3e3e3"/><rect x="840" y="160" fill="#e6e6e6" style="width:16px"/>
<rect x="825" y="180" fill="#e9e9e9" style="width:15px"/><rect x="840" y="180" fill="#e3e3e3" style="width:16px"/>
<rect x="820" y="187" fill="#ececec" style="height:33px"/><rect x="840" y="200" fill="#e5e5e5"/><rect x="860" y="187" fill="#eeeeec" style="height:32px"/>
<rect x="820" y="220" fill="#e8e8e8"/><rect x="840" y="220" fill="#e6e6e6"/><rect x="860" y="219" fill="#ebecec" style="width:12px;height:66px"/>
<rect x="800" y="240" fill="#f0f0f0"/><rect x="820" y="240" fill="#d9dadc"/><rect x="840" y="240" fill="#e8e8e8"/>
<rect x="830" y="260" fill="#e9e9e9" style="width:10px"/><rect x="840" y="260" fill="#ececec"/>
<rect x="830" y="280" fill="#f0f0f0" style="width:10px"/><rect x="840" y="280" fill="#ececec"/>
<rect x="860" y="285" fill="#e9ebea" style="height:50px"/>
<rect x="820" y="300" fill="#e8e8e8"/><rect x="840" y="300" fill="#e5e5e5"/>
<rect x="820" y="320" fill="#f4f4f4"/><rect x="840" y="320" fill="#ebebeb" style="height:20px"/>
<rect x="830" y="340" fill="#e0e0e0" style="width:10px"/><rect x="840" y="340" fill="#e6e6e6" style="width:30px"/>
<rect x="830" y="360" fill="#d6dadd" style="width:40px"/>
<rect x="830" y="380" fill="#a9c2d0" style="width:40px;height:17px"/>
<rect x="830" y="400" fill="#e3e3e3" style="width:10px"/><rect x="840" y="400" fill="#e6e6e6"/>
<rect x="830" y="420" fill="#f2f2ef" style="width:10px"/><rect x="840" y="420" fill="#eaeaea"/>
<rect x="825" y="440" fill="#e8e8e8" style="width:15px"/><rect x="840" y="440" fill="#e8e8e8"/><rect x="860" y="440" fill="#f0f0f0" style="width:12px"/>
<rect x="825" y="460" fill="#f8f8f8" style="width:15px"/><rect x="840" y="460" fill="#f8f8f8"/>
<rect x="800" y="480" fill="#f4f4f2"/><rect x="820" y="480" fill="#eaeaea"/><rect x="840" y="480" fill="#ededed"/><rect x="860" y="480" fill="#f4f4f4"/>
<rect x="822" y="500" fill="#f0f0f0" style="width:18px"/><rect x="840" y="500" fill="#e8e8e8"/><rect x="860" y="500" fill="#ededed"/>
<rect x="840" y="520" fill="#ececec"/><rect x="860" y="520" fill="#f2f2f2" style="width:10px"/>
<!-- scrollbar area -->
<rect x="900" y="187" fill="#fafafa" style="width:19px;height:32px"/><rect x="900" y="270" fill="#fafafa" style="width:19px;height:50px"/>
<rect x="919" y="176" fill="#d0d0d0" style="width:15px;height:11px"/>
<path d="M919 187l21 6 5 2v85l-11 2v8l-15 5z" fill="#d3d3d3"/><path d="M919 222h7l3 6v12l-3 5-7 10z" fill="#c6c6c6"/>
<rect x="919" y="300" fill="#e2e2e2" style="width:26px"/><rect x="919" y="320" fill="#e9e9e9" style="width:21px;height:15px"/>
</svg>

<!-- excel icon + circle + scroll arrows -->
<svg width="945" height="671" viewBox="0 0 945 671" fill="none" style="z-index:2">
 <path d="M924 119l3.500-3.500 3.500 3.500M924 573l3.500 3.500 3.500-3.500" stroke="#555" stroke-width="1.500"/>
 <path d="M221 305h9l2 2v11h-11z" fill="#f4f4f4" stroke="#999" stroke-width=".8"/><rect x="218" y="307" width="8" height="8" fill="#4a8c3a"/>
 <path d="M220 309l4 4M224 309l-4 4" stroke="#fff"/><path d="M228 310h3M228 312h3M228 314h3" stroke="#999" stroke-width=".7"/>
 <ellipse cx="249.500" cy="307.500" rx="57" ry="34" stroke="#f23c3c" stroke-width="3" transform="rotate(2 249 307)"/>
</svg>

<!-- footer -->
<div class="a" style="left:207px;top:584px;width:730px;height:1px;background:#e8e8e8"></div>
<span class="a" style="left:225px;top:605px;font-size:12px;line-height:16px;color:#222">文件名(N)：</span>
<div class="a" style="left:300px;top:601px;width:492px;height:24px;border-top:1px solid #c8c8c8;border-bottom:1px solid #c8c8c8;border-right:1px solid #c8c8c8"></div>
<div class="a" style="left:300px;top:601px;width:46px;height:24px;background:#e3e3e3;border-radius:8px 12px 12px 8px"></div>
<span class="a" style="left:225px;top:637px;font-size:12px;line-height:16px;color:#222">文件类型(T)：</span>
<div class="a" style="left:308px;top:633px;width:485px;height:24px;background:#f8f8f8;border:1px solid #c8c8c8;padding-left:4px;font-size:12px;line-height:22px;color:#111">所有文件(*.*)</div>
<div class="a" style="left:811px;top:600px;width:108px;height:24px;background:#dd8040"></div>
<span class="a" style="left:845px;top:604px;font-size:13px;line-height:16px;color:#fff">打开</span>
<div class="a" style="left:811px;top:632px;width:108px;height:24px;background:#e1e2e4;border:1px solid #bfbfc4;text-align:center;font-size:13px;line-height:22px;color:#111">取消</div>
<svg width="945" height="671" viewBox="0 0 945 671" fill="none" style="z-index:3">
 <path d="M781 612l3.500 3.500 3.500-3.500M781 644l3.500 3.500 3.500-3.500" stroke="#666" stroke-width="1.500"/>
 <path d="M932 667h2v2h-2zM928 667h2v2h-2zM932 663h2v2h-2z" fill="#b5b5b5"/>
 <!-- paw -->
 <g fill="#fff" stroke="#dcdcdc" stroke-width="2.500">
  <ellipse cx="789" cy="587" rx="6" ry="9"/><ellipse cx="802" cy="579" rx="7" ry="10"/><ellipse cx="817" cy="578" rx="7" ry="10"/><ellipse cx="829" cy="592" rx="6" ry="9"/>
  <path d="M790 610q6-15 20-15 14 0 20 15" fill="#fff"/>
 </g>
 <text x="727" y="623" font-family="Liberation Sans" font-size="38" font-weight="bold" fill="#fff" fill-opacity=".7" stroke="#cfcfcf" stroke-width="1.200">Bai</text>
 <text x="784" y="622" font-family="Liberation Sans" font-size="26" font-weight="bold" fill="#fff" fill-opacity=".6" stroke="#d4d4d4" stroke-width="1">du</text>
 <text x="833" y="623" font-family="Liberation Sans,Noto Sans CJK SC" font-size="28" font-weight="bold" fill="#fff" fill-opacity=".85" stroke="#dcdcdc" stroke-width=".8">经验</text>
 <text x="725" y="649" textLength="168" font-family="Liberation Sans" font-size="21" fill="#fff" fill-opacity=".75" stroke="#cfcfcf" stroke-width=".8">jingyan.baidu.com</text>
</svg>
</body></html>
